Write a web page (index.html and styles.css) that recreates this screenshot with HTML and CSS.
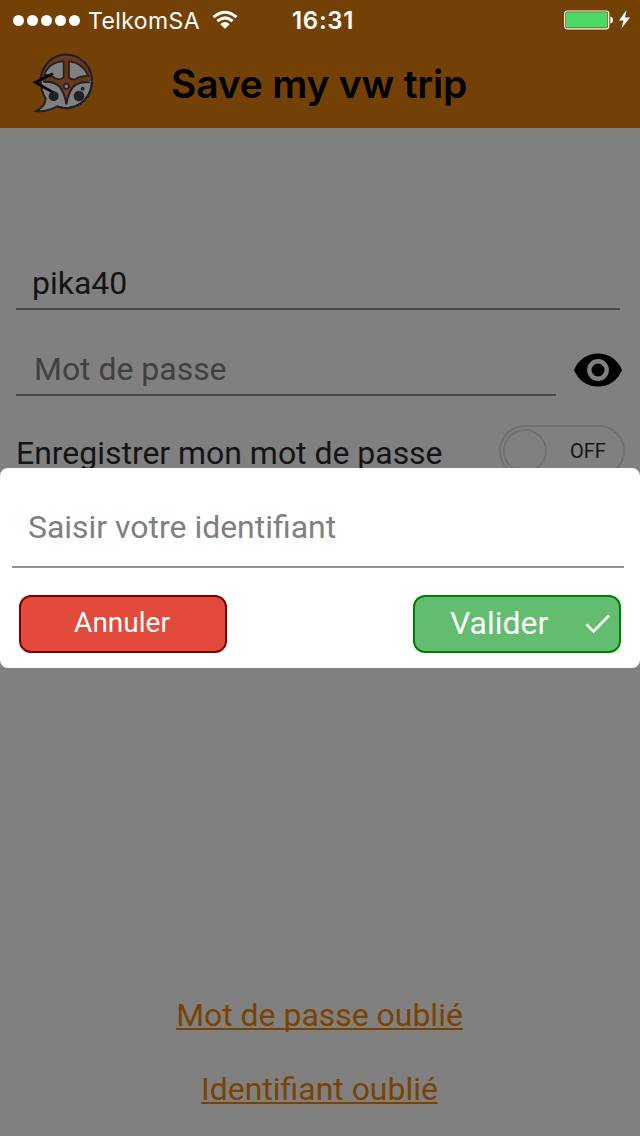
FILE: index.html
```
<!DOCTYPE html>
<html lang="fr">
<head>
<meta charset="utf-8">
<title>Save my vw trip</title>
<link rel="stylesheet" href="styles.css">
</head>
<body>
<div class="screen">
  <header class="header">
    <div class="status">
      <div class="signal"><i></i><i></i><i></i><i></i><i></i></div>
      <span class="carrier">TelkomSA</span>
      <svg class="wifi" width="26" height="20" viewBox="0 0 26 20" fill="none" stroke="#fff" stroke-width="3">
        <path d="M1.6 7.2Q13-2.8 24.4 7.2M5.4 11.2Q13 4.6 20.6 11.2"/>
        <path d="M8.3 14.2Q13 10 17.7 14.2L13 18.8Z" fill="#fff" stroke="none"/>
      </svg>
      <span class="clock">16:31</span>
      <svg class="battery" width="68" height="22" viewBox="0 0 68 22">
        <rect x=".7" y="1" width="44" height="17.8" rx="2.5" fill="none" stroke="#fff" stroke-width="1.2"/>
        <rect x="2" y="2.300" width="41.5" height="15.200" rx="1" fill="#4cd964"/>
        <path d="M46.3 6.500Q49 7 49 10T46.300 13.500Z" fill="#fff"/>
        <path d="M62.500 0L55 10.500H59.500L57.400 18.500L66 7.500H61Z" fill="#fff"/>
      </svg>
    </div>
    <div class="nav">
      <svg class="logo" width="84" height="76" viewBox="0 0 252 228">
        <defs>
          <radialGradient id="fur" cx=".5" cy=".75" r=".75">
            <stop offset="0" stop-color="#7d401a"/><stop offset=".5" stop-color="#653516"/><stop offset="1" stop-color="#703a15"/>
          </radialGradient>
        </defs>
        <path d="M66 138A77 80 0 1 1 112 187Q78 205 49 201Q76 187 77 164Q69 153 66 138Z" fill="#808080" stroke="#202027" stroke-width="6"/>
        <path d="M64 111A76 80 0 0 1 216 111Q174 113 161 127Q144 150 139 181Q134 148 119 128Q104 113 64 111Z" fill="url(#fur)"/>
        <path d="M66 138A77 80 0 1 1 112 187" fill="none" stroke="#202027" stroke-width="6"/>
        <path d="M131 52V99Q122 110 106 103Q96 94 73 92Q88 54 131 52ZM147 52Q188 56 204 95Q180 97 168 104Q157 110 147 100Z" fill="#808080" stroke="#202027" stroke-width="5"/>
        <path d="M72 113Q104 112 119 128Q135 150 139 181Q144 148 160 128Q176 113 206 115" fill="none" stroke="#202027" stroke-width="6" stroke-linecap="round"/>
        <circle cx="139" cy="127" r="8" fill="#808080" stroke="#202027" stroke-width="5"/>
        <g fill="#202027"><circle cx="101" cy="157" r="15"/><circle cx="177" cy="156" r="16"/><circle cx="188" cy="134" r="6"/></g>
        <path d="M99 89L46 115L99 145" fill="none" stroke="#000" stroke-width="8"/>
      </svg>
      <h1 class="title">Save my vw trip</h1>
    </div>
  </header>

  <main class="form">
    <div class="field login">pika40</div>
    <div class="password-row">
      <div class="field password">Mot de passe</div>
      <svg class="eye" width="48" height="34" viewBox="0 0 48 34">
        <path d="M0 17C4 7 13 .4 24 .4S44 7 48 17C44 27 35 33.600 24 33.600S4 27 0 17Z"/>
        <circle cx="24" cy="17" r="8.700" fill="none" stroke="#808080" stroke-width="4.400"/>
      </svg>
    </div>
    <div class="remember">
      <span class="remember-label">Enregistrer mon mot de passe</span>
      <div class="toggle"><span class="knob"></span><span class="toggle-label">OFF</span></div>
    </div>
  </main>

  <nav class="links">
    <a class="link forgot-password">Mot de passe oublié</a>
    <a class="link forgot-login">Identifiant oublié</a>
  </nav>

  <section class="dialog">
    <div class="prompt">Saisir votre identifiant</div>
    <div class="actions">
      <div class="button cancel">Annuler</div>
      <div class="button confirm">
        <span>Valider</span>
        <svg class="check" width="26" height="20" viewBox="0 0 26 20" fill="none" stroke="#fff" stroke-width="2.600"><path d="M1.500 10.500L8.500 17.500L24 1.500"/></svg>
      </div>
    </div>
  </section>
</div>
</body>
</html>
```
FILE: styles.css
```
* { box-sizing: border-box; }
body { margin: 0; font-family: Roboto, sans-serif; }
.screen {
  position: relative;
  display: flex;
  flex-direction: column;
  width: 640px;
  height: 1136px;
  overflow: hidden;
  background: #808080;
  font-size: 31.95px;
  line-height: 40px;
  color: #141414;
}
.header { height: 128px; background: #734105; font-family: Inter, sans-serif; }
.status { display: flex; align-items: center; height: 40px; padding: 1px 0 0 13px; color: #fff; }
.signal { display: flex; gap: 3px; }
.signal i { width: 11px; height: 11px; border-radius: 50%; background: #fff; }
.carrier { width: 132px; padding-left: 8px; font-size: 23px; letter-spacing: .4px; white-space: nowrap; }
.wifi { flex: none; margin-bottom: 1px; }
.clock { width: 68px; margin-left: 54px; font-size: 24px; font-weight: 600; letter-spacing: .7px; white-space: nowrap; }
.battery { margin-left: auto; margin-right: 8px; }
.nav { display: flex; height: 88px; padding: 4px 0 0 20px; }
.title { margin: 20px 0 0 67px; font-size: 39px; font-weight: 600; line-height: 40px; letter-spacing: -.2px; color: #000; white-space: nowrap; }
.form { display: flex; flex-direction: column; padding: 134px 15px 0 16px; }
.field { padding-top: 1px; border-bottom: 2px solid #484848; white-space: nowrap; }
.login { width: 604px; height: 48px; padding-left: 16px; }
.password-row { display: flex; gap: 18px; margin-top: 38px; }
.password { width: 540px; height: 48px; padding-left: 18px; color: #404040; }
.eye { margin-top: 5px; }
.remember { display: flex; justify-content: space-between; margin-top: 29px; }
.remember-label { padding-top: 8px; white-space: nowrap; }
.toggle { display: flex; align-items: center; width: 126px; height: 52px; padding-left: 2px; border: 2px solid #707070; border-radius: 26px; }
.knob { width: 44px; height: 44px; border: 2px solid #707070; border-radius: 50%; }
.toggle-label { margin-left: 23px; font-size: 20px; }
.links { display: flex; flex-direction: column; align-items: center; gap: 34px; margin-top: auto; padding: 0 1px 27px 0; }
.link { color: #7a4303; text-decoration: underline; text-decoration-thickness: 2px; text-underline-offset: 2px; text-decoration-skip-ink: none; white-space: nowrap; }
.dialog { position: absolute; top: 468px; left: 0; width: 640px; height: 200px; padding: 38px 16px 0 12px; border-radius: 8px; background: #fff; }
.prompt { height: 62px; padding: 1px 0 0 16px; border-bottom: 2px solid #919191; color: #808080; }
.actions { display: flex; justify-content: space-between; padding: 27px 3px 0 7px; }
.button { display: flex; align-items: center; width: 208px; height: 58px; border: 2px solid; border-radius: 12px; color: #fff; }
.cancel { justify-content: center; padding: 0 2px 3px 0; border-color: #800000; background: #e24b3b; font-size: 28px; }
.confirm { justify-content: space-between; padding: 0 8px 2px 35px; border-color: #008000; background: #62bd6f; }
.check { margin-top: 2px; }
```
